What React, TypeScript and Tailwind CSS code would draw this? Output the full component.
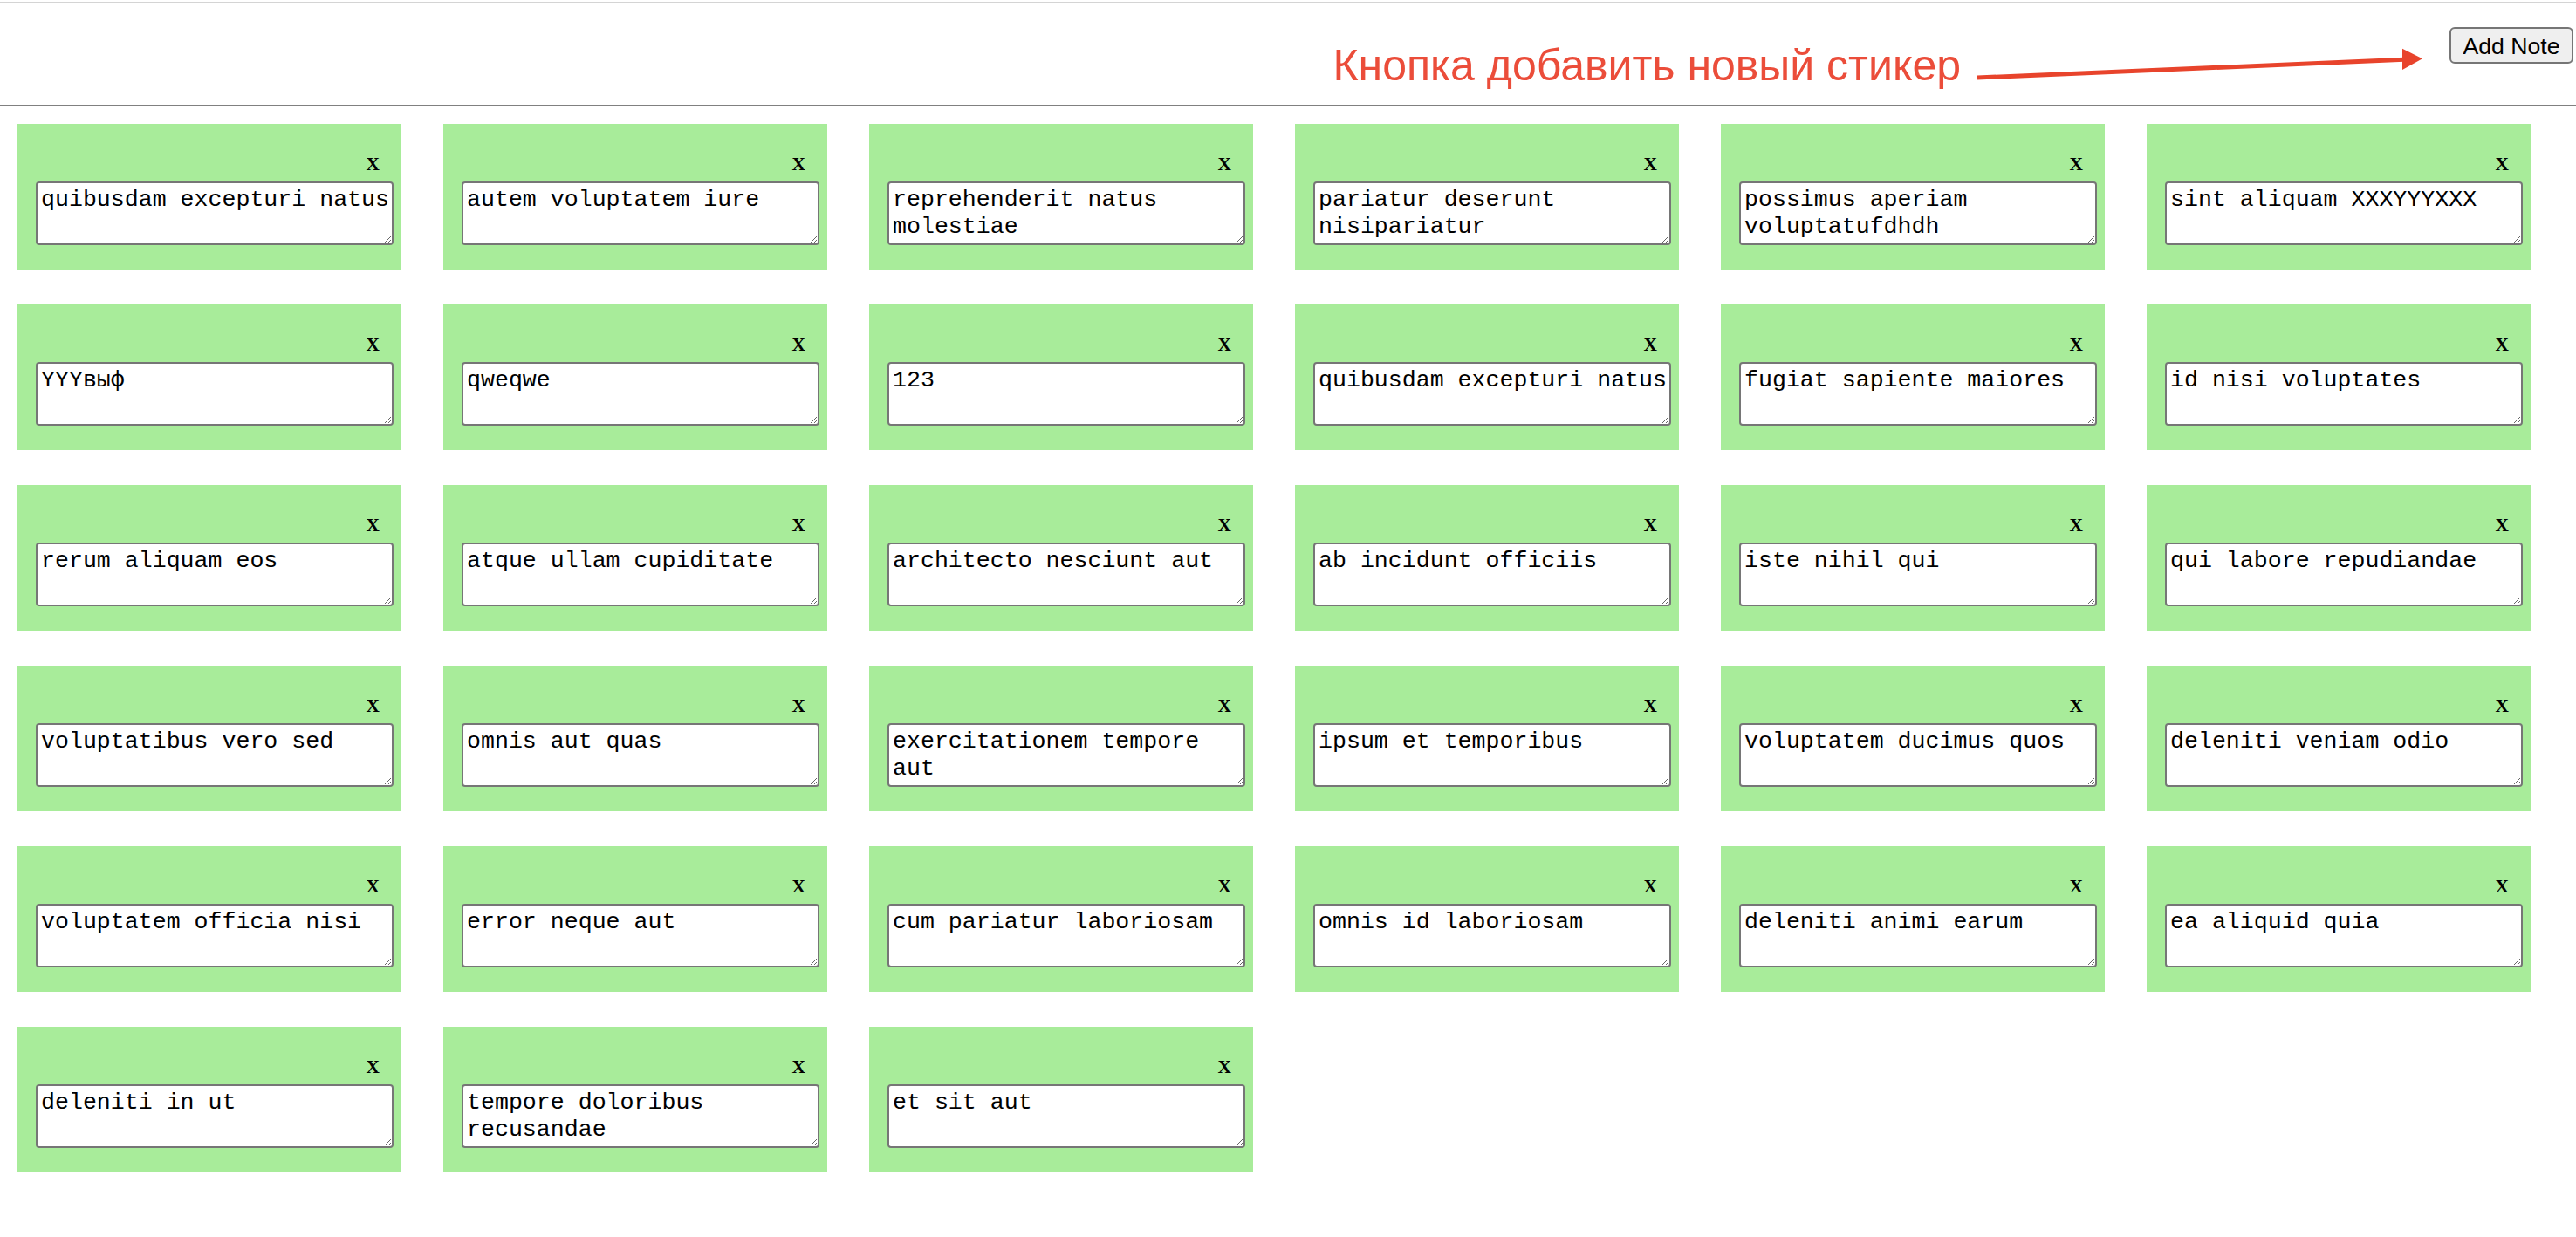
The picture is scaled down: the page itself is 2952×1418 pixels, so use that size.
import React from 'react';

const notes = [
  'quibusdam excepturi natus',
  'autem voluptatem iure',
  'reprehenderit natus molestiae',
  'pariatur deserunt nisipariatur',
  'possimus aperiam voluptatufdhdh',
  'sint aliquam XXXYYYXXX',
  'YYYвыф',
  'qweqwe',
  '123',
  'quibusdam excepturi natus',
  'fugiat sapiente maiores',
  'id nisi voluptates',
  'rerum aliquam eos',
  'atque ullam cupiditate',
  'architecto nesciunt aut',
  'ab incidunt officiis',
  'iste nihil qui',
  'qui labore repudiandae',
  'voluptatibus vero sed',
  'omnis aut quas',
  'exercitationem tempore aut',
  'ipsum et temporibus',
  'voluptatem ducimus quos',
  'deleniti veniam odio',
  'voluptatem officia nisi',
  'error neque aut',
  'cum pariatur laboriosam',
  'omnis id laboriosam',
  'deleniti animi earum',
  'ea aliquid quia',
  'deleniti in ut',
  'tempore doloribus recusandae',
  'et sit aut',
];

const Note: React.FC<{ text: string }> = ({ text }) => (
  <div className="flex flex-col h-[167px] bg-[#a8ec9a] pt-[34px] pl-[21px] pr-[9px]">
    <div className="flex justify-end pr-[16px] h-[24px]">
      <span className="font-['Liberation_Serif',serif] font-bold text-[21.33px] leading-[24px] text-black">
        X
      </span>
    </div>
    <textarea
      defaultValue={text}
      className="mt-[8px] w-[410px] h-[73px] resize overflow-hidden bg-white text-black border-2 border-[#767676] rounded-[4px] pl-[4px] pr-[2px] py-[4px] font-['Liberation_Mono',monospace] text-[26.6px] leading-[30.5px]"
    />
  </div>
);

const App: React.FC = () => {
  return (
    <div className="min-h-screen bg-white pt-[2px]">
      <div className="h-[2px] bg-[#d4d4d4]" />

      {/* Header with annotation */}
      <div className="flex justify-end items-start h-[116px] pr-[3px]">
        <div className="mt-[42px] font-['Liberation_Sans',Arial,sans-serif] text-[50px] leading-[58px] text-[#eb4d3a] whitespace-nowrap">
          Кнопка добавить новый стикер
        </div>
        <svg width="518" height="45" viewBox="0 0 518 45" className="mt-[46px] ml-[15px]">
          <line x1="4" y1="39" x2="493" y2="18.3" stroke="#e8442c" strokeWidth="5" />
          <polygon points="491,5.7 514,17.3 491,30" fill="#e8442c" />
        </svg>
        <button className="mt-[27px] ml-[27px] w-[142px] h-[42px] bg-[#efefef] border-2 border-[#767676] rounded-[6px] font-['Liberation_Sans',Arial,sans-serif] text-[26.67px] text-black">
          Add Note
        </button>
      </div>
      <div className="h-[2px] bg-[#808080]" />

      <div className="pl-[20px] pt-[20px] pb-[20px] grid grid-cols-[repeat(6,440px)] gap-x-[48px] gap-y-[40px]">
        {notes.map((n, i) => (
          <Note key={i} text={n} />
        ))}
      </div>
    </div>
  );
};

export default App;
